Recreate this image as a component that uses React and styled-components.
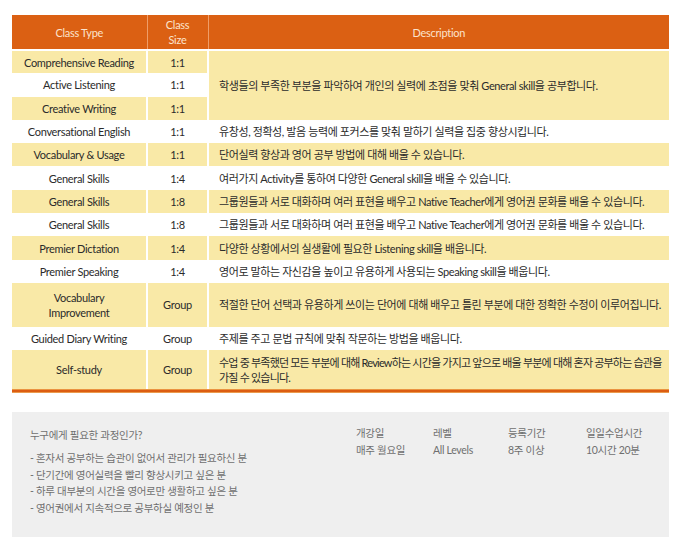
import React from 'react';
import styled, { createGlobalStyle } from 'styled-components';

const GlobalStyle = createGlobalStyle`
	html, body {
		margin: 0;
		padding: 0;
		background: #fff;
	}
	body {
		font-family: Lato, "Noto Sans CJK KR", sans-serif;
		color: #2b2b2b;
	}
`;

const Page = styled.div`
	width: 682px;
	height: 546px;
	padding: 15px 13px 0 12px;
	box-sizing: border-box;
	overflow: hidden;
`;

const Table = styled.table`
	width: 657px;
	border-collapse: collapse;
	table-layout: fixed;
	font-size: 11px;
	letter-spacing: -0.3px;
`;

const HeadCell = styled.th`
	height: 34px;
	padding: 0;
	background: #db6013;
	color: #fbe3cc;
	font-weight: normal;
	line-height: 15px;
	border-left: 1px solid #ef9d68;
	border-right: 1px solid #ef9d68;
	border-bottom: 2px solid #fff;
	&:first-child { border-left: none; }
	&:last-child { border-right: none; }
`;

const Row = styled.tr`
	height: ${p => p.$h || 23.3}px;
`;

const Cell = styled.td`
	padding: 0;
	text-align: center;
	line-height: 15px;
	background: ${p => (p.$alt ? '#f9e9a7' : '#fff')};
	border-left: 2px solid #fff;
	border-right: 2px solid #fff;
	&:first-child { border-left: none; }
	&:last-child { border-right: none; }
`;

const DescCell = styled(Cell)`
	text-align: left;
	padding: 0 4px 0 10px;
	white-space: nowrap;
	letter-spacing: ${p => (p.$tight ? '-0.8px' : '-0.4px')};
`;

const BottomRule = styled.div`
	width: 657px;
	height: 4px;
	background: linear-gradient(to bottom, #f2b25c 0%, #dc5d12 35%, #dc5d12 70%, #f4c678 100%);
`;

const InfoPanel = styled.div`
	margin-top: 19px;
	width: 657px;
	height: 125px;
	background: #efefef;
	box-sizing: border-box;
	padding: 13px 0 0 18px;
	display: flex;
	font-family: Lato, "Noto Sans CJK KR", sans-serif;
	font-size: 10.5px;
	letter-spacing: -0.3px;
	color: #6f6f6f;
`;

const Who = styled.div`
	width: 326px;
	padding-top: 2px;
`;

const WhoTitle = styled.div`
	line-height: 16px;
	margin-bottom: 7px;
`;

const WhoList = styled.ul`
	list-style: none;
	margin: 0;
	padding: 0;
	li { line-height: 16.5px; }
`;

const Facts = styled.div`
	display: flex;
`;

const Fact = styled.div`
	width: ${p => p.$w}px;
	line-height: 17px;
`;

const rows = [
	{ type: 'Comprehensive Reading', size: '1:1', alt: true, desc: '학생들의 부족한 부분을 파악하여 개인의 실력에 초점을 맞춰 General skill을 공부합니다.', span: 3 },
	{ type: 'Active Listening', size: '1:1', alt: false },
	{ type: 'Creative Writing', size: '1:1', alt: true },
	{ type: 'Conversational English', size: '1:1', alt: false, desc: '유창성, 정확성, 발음 능력에 포커스를 맞춰 말하기 실력을 집중 향상시킵니다.' },
	{ type: 'Vocabulary & Usage', size: '1:1', alt: true, desc: '단어실력 향상과 영어 공부 방법에 대해 배울 수 있습니다.' },
	{ type: 'General Skills', size: '1:4', alt: false, desc: '여러가지 Activity를 통하여 다양한 General skill을 배울 수 있습니다.' },
	{ type: 'General Skills', size: '1:8', alt: true, desc: '그룹원들과 서로 대화하며 여러 표현을 배우고 Native Teacher에게 영어권 문화를 배울 수 있습니다.' },
	{ type: 'General Skills', size: '1:8', alt: false, desc: '그룹원들과 서로 대화하며 여러 표현을 배우고 Native Teacher에게 영어권 문화를 배울 수 있습니다.' },
	{ type: 'Premier Dictation', size: '1:4', alt: true, desc: '다양한 상황에서의 실생활에 필요한 Listening skill을 배웁니다.' },
	{ type: 'Premier Speaking', size: '1:4', alt: false, desc: '영어로 말하는 자신감을 높이고 유용하게 사용되는 Speaking skill을 배웁니다.' },
	{ type: <>Vocabulary<br />Improvement</>, size: 'Group', alt: true, h: 44, desc: '적절한 단어 선택과 유용하게 쓰이는 단어에 대해 배우고 틀린 부분에 대한 정확한 수정이 이루어집니다.' },
	{ type: 'Guided Diary Writing', size: 'Group', alt: false, desc: '주제를 주고 문법 규칙에 맞춰 작문하는 방법을 배웁니다.' },
	{ type: 'Self-study', size: 'Group', alt: true, h: 39, tight: true, desc: <>수업 중 부족했던 모든 부분에 대해 Review하는 시간을 가지고 앞으로 배울 부분에 대해 혼자 공부하는 습관을<br />가질 수 있습니다.</> },
];

const facts = [
	{ label: '개강일', value: '매주 월요일', w: 77 },
	{ label: '레벨', value: 'All Levels', w: 75 },
	{ label: '등록기간', value: '8주 이상', w: 78 },
	{ label: '일일수업시간', value: '10시간 20분', w: 80 },
];

export default function App() {
	return (
		<Page>
			<GlobalStyle />
			<Table>
				<colgroup>
					<col style={{ width: 135 }} />
					<col style={{ width: 61 }} />
					<col />
				</colgroup>
				<thead>
					<tr>
						<HeadCell>Class Type</HeadCell>
						<HeadCell>Class<br />Size</HeadCell>
						<HeadCell>Description</HeadCell>
					</tr>
				</thead>
				<tbody>
					{rows.map((r, i) => (
						<Row key={i} $h={r.h}>
							<Cell $alt={r.alt}>{r.type}</Cell>
							<Cell $alt={r.alt}>{r.size}</Cell>
							{r.desc && (
								<DescCell $alt={r.span ? true : r.alt} $tight={r.tight} rowSpan={r.span || 1}>{r.desc}</DescCell>
							)}
						</Row>
					))}
				</tbody>
			</Table>
			<BottomRule />
			<InfoPanel>
				<Who>
					<WhoTitle>누구에게 필요한 과정인가?</WhoTitle>
					<WhoList>
						<li>- 혼자서 공부하는 습관이 없어서 관리가 필요하신 분</li>
						<li>- 단기간에 영어실력을 빨리 향상시키고 싶은 분</li>
						<li>- 하루 대부분의 시간을 영어로만 생활하고 싶은 분</li>
						<li>- 영어권에서 지속적으로 공부하실 예정인 분</li>
					</WhoList>
				</Who>
				<Facts>
					{facts.map(f => (
						<Fact key={f.label} $w={f.w}>
							<div>{f.label}</div>
							<div>{f.value}</div>
						</Fact>
					))}
				</Facts>
			</InfoPanel>
		</Page>
	);
}
